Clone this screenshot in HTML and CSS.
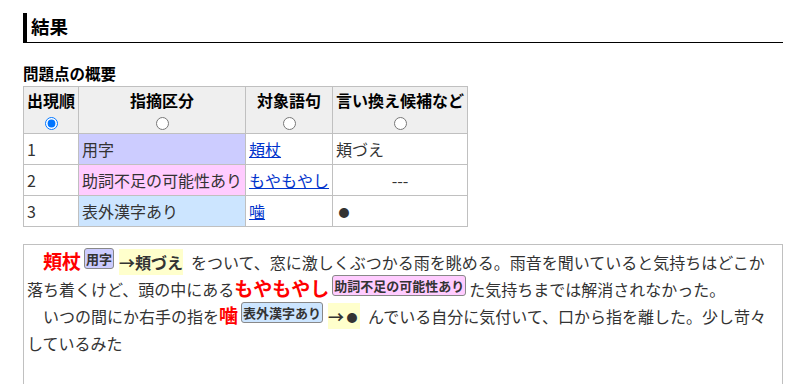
FILE: index.html
```
<!DOCTYPE html>
<html lang="ja">
<head>
  <meta charset="UTF-8" />
  <title>結果</title>
  <link rel="stylesheet" href="styles.css">
</head>
<body>
  <div class="page">
    <h2 class="section-title">結果</h2>

    <h3 class="sub-title">問題点の概要</h3>
    <table class="summary">
      <tr>
        <th><span class="th-label">出現順</span><input type="radio" name="sort" checked></th>
        <th><span class="th-label">指摘区分</span><input type="radio" name="sort"></th>
        <th><span class="th-label">対象語句</span><input type="radio" name="sort"></th>
        <th><span class="th-label">言い換え候補など</span><input type="radio" name="sort"></th>
      </tr>
      <tr>
        <td>1</td>
        <td class="kind-yoji">用字</td>
        <td><a href="#w1">頬杖</a></td>
        <td>頬づえ</td>
      </tr>
      <tr>
        <td>2</td>
        <td class="kind-joshi">助詞不足の可能性あり</td>
        <td><a href="#w2">もやもやし</a></td>
        <td class="center">---</td>
      </tr>
      <tr>
        <td>3</td>
        <td class="kind-hyogai">表外漢字あり</td>
        <td><a href="#w3">噛</a></td>
        <td><span class="dot">●</span></td>
      </tr>
    </table>

    <div class="result-text">
      <p>　<span class="err" id="w1">頬杖</span><span class="tag kind-yoji">用字</span><span class="fix">→頬づえ</span>をついて、窓に激しくぶつかる雨を眺める。雨音を聞いていると気持ちはどこか落ち着くけど、頭の中にある<span class="err" id="w2">もやもやし</span><span class="tag kind-joshi tag-last">助詞不足の可能性あり</span>た気持ちまでは解消されなかった。</p>
      <p>　いつの間にか右手の指を<span class="err" id="w3">噛</span><span class="tag kind-hyogai">表外漢字あり</span><span class="fix">→<span class="dot">●</span></span>んでいる自分に気付いて、口から指を離した。少し苛々しているみた</p>
    </div>
  </div>
</body>
</html>
```

FILE: styles.css
```
body {
  margin: 0;
  font-family: "Noto Sans CJK JP", "Noto Sans", sans-serif;
  font-size: 16px;
  color: #333;
  background: #fff;
}
.page {
  padding: 13px 4px 0 23px;
}
.section-title {
  margin: 0;
  padding: 1px 0 4px 4px;
  font-size: 18.5px;
  line-height: 24px;
  color: #000;
  border-left: 4px solid #000;
  border-bottom: 1px solid #000;
}
.sub-title {
  margin: 20px 0 3px;
  font-size: 15.5px;
  line-height: 20px;
  color: #000;
}
.summary {
  border-collapse: collapse;
}
.summary th,
.summary td {
  border: 1px solid #c0c0c0;
  padding: 3px;
  line-height: 24px;
  text-align: left;
}
.summary th {
  background: #efefef;
  color: #000;
  text-align: center;
}
.th-label {
  display: block;
  line-height: 20px;
}
.summary th input {
  display: block;
  margin: 7px auto 0;
  width: 13px;
  height: 13px;
}
.summary td.center {
  text-align: center;
}
.summary a {
  color: #0033cc;
}
.dot {
  display: inline-block;
  width: 16px;
  font-size: 11px;
  line-height: 1;
  vertical-align: 1px;
  text-align: center;
}
.kind-yoji {
  background: #ccccff;
}
.kind-joshi {
  background: #ffccff;
}
.kind-hyogai {
  background: #cce5ff;
}
.result-text {
  margin-top: 17px;
  border: 1px solid #c0c0c0;
  padding: 4px 3px;
  min-height: 160px;
}
.result-text p {
  margin: 0;
  line-height: 27px;
}
.err {
  color: #f00;
  font-weight: bold;
  font-size: 19px;
  line-height: 1;
}
.tag {
  display: inline-block;
  vertical-align: top;
  margin: -1px 0 0 3px;
  padding: 0 1px;
  font-size: 13px;
  font-weight: bold;
  line-height: 19px;
  border: 1px solid #888;
  border-radius: 3px;
}
.tag-last {
  margin-right: 3px;
}
.fix {
  margin: 0 8px 0 5px;
  padding: 1px 0;
  font-weight: bold;
  background: #ffffcc;
}
```
